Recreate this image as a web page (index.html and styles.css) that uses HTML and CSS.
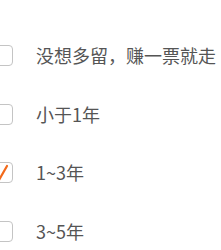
FILE: index.html
```html
<!DOCTYPE html>
<html lang="zh">
<head>
<meta charset="utf-8">
<link rel="stylesheet" href="styles.css">
</head>
<body>
<ul class="list">
  <li class="row"><span class="box"></span><span class="label">没想多留，赚一票就走</span></li>
  <li class="row"><span class="box"></span><span class="label">小于1年</span></li>
  <li class="row"><span class="box checked"><svg class="tick" viewBox="0 0 21 21" width="21" height="21"><path d="M2 14 L7 18 L15 4" fill="none" stroke="#f26a1b" stroke-width="2.2" stroke-linecap="round" stroke-linejoin="round"/></svg></span><span class="label">1~3年</span></li>
  <li class="row"><span class="box"></span><span class="label">3~5年</span></li>
</ul>
</body>
</html>
```
FILE: styles.css
```css
html, body {
  margin: 0;
  padding: 0;
  background: #fff;
  overflow: hidden;
}
.list {
  list-style: none;
  margin: 0;
  padding: 45px 0 0 0;
  display: flex;
  flex-direction: column;
  gap: 37.67px;
}
.row {
  display: flex;
  align-items: flex-start;
  height: 21px;
}
.box {
  flex: none;
  width: 21px;
  height: 21px;
  box-sizing: border-box;
  margin-left: -8px;
  border: 1px solid #c4c4c4;
  border-radius: 4px;
  background: #fff;
  position: relative;
}
.tick {
  position: absolute;
  left: -1px;
  top: -1px;
}
.label {
  margin-left: 23px;
  font-family: "Noto Sans CJK SC", "Noto Sans", sans-serif;
  font-size: 18px;
  line-height: 21px;
  color: #555;
  white-space: nowrap;
}
```
